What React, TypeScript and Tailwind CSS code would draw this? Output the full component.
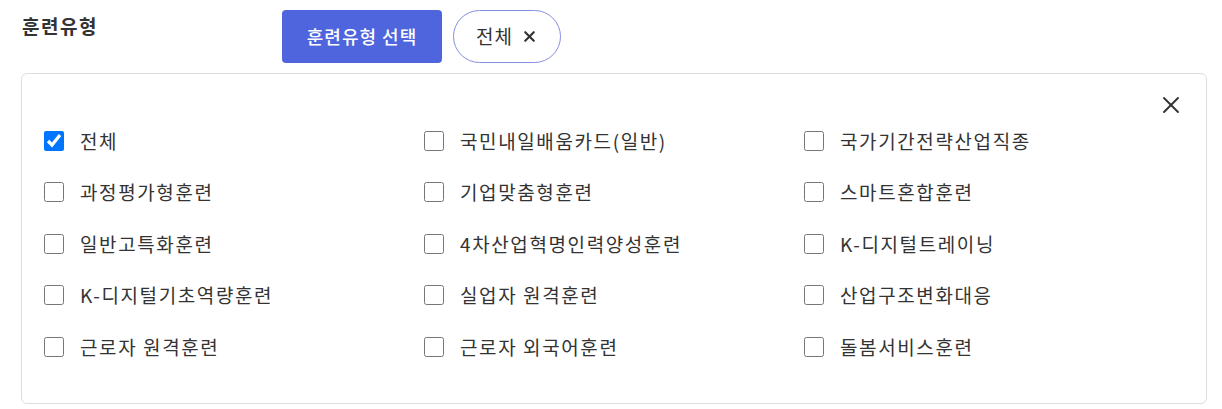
import { X } from "lucide-react";

const items = [
    "전체",
    "국민내일배움카드(일반)",
    "국가기간전략산업직종",
    "과정평가형훈련",
    "기업맞춤형훈련",
    "스마트혼합훈련",
    "일반고특화훈련",
    "4차산업혁명인력양성훈련",
    "K-디지털트레이닝",
    "K-디지털기초역량훈련",
    "실업자 원격훈련",
    "산업구조변화대응",
    "근로자 원격훈련",
    "근로자 외국어훈련",
    "돌봄서비스훈련",
];

export default function App() {
    return (
        <div className="w-[1222px] h-[409px] bg-white text-[#333] font-['Noto_Sans_CJK_KR','Noto_Sans',sans-serif]">
            {/* Header row */}
            <div className="flex items-start pl-[22px] pt-[10px]">
                <h2 className="w-[260px] text-[19px] font-bold tracking-[1.5px] leading-[34px] -mt-[1px]">훈련유형</h2>
                <div className="flex gap-[11px]">
                    <button className="h-[53px] w-[160px] rounded-[4px] bg-[#4e65dd] text-white text-[18px] tracking-[1px] font-medium">
                        훈련유형 선택
                    </button>
                    <button className="h-[53px] w-[108px] rounded-full border border-[#8690e0] flex items-center justify-center gap-[8px] text-[19px] tracking-[1px]">
                        전체
                        <X size={17} strokeWidth={3} />
                    </button>
                </div>
            </div>

            {/* Panel */}
            <div className="relative mx-[21px] mt-[10px] w-[1186px] h-[331px] border border-[#dddddd] rounded-[6px] pl-[22px] pt-[41px]">
                <button className="absolute right-[21px] top-[17px] text-[#333]">
                    <X size={28} strokeWidth={1.6} />
                </button>
                <div className="grid grid-cols-[380px_380px_380px]">
                    {items.map((label, i) => (
                        <label key={label} className="h-[51.5px] flex items-center gap-[16px] text-[19px] tracking-[1.6px]">
                            <input type="checkbox" defaultChecked={i === 0} className="w-5 h-5 m-0" />
                            <span>{label}</span>
                        </label>
                    ))}
                </div>
            </div>
        </div>
    );
}
